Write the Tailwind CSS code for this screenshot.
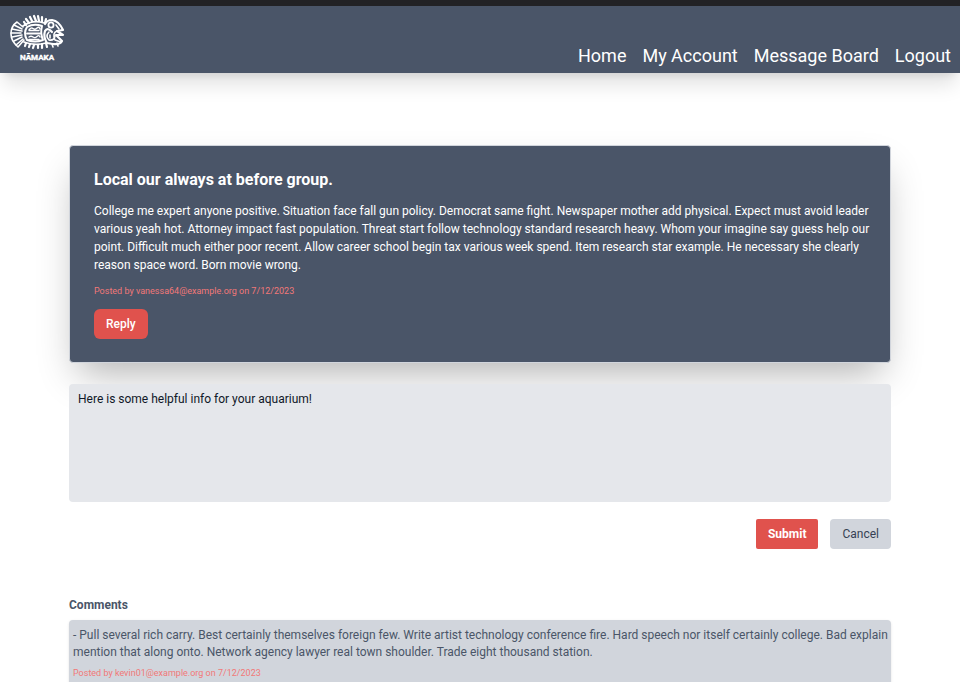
<!DOCTYPE html>
<html lang="en">
<head>
<meta charset="utf-8">
<meta name="viewport" content="width=device-width, initial-scale=1">
<title>Nāmaka – Message Board</title>
<script src="https://cdn.jsdelivr.net/npm/@tailwindcss/browser@4"></script>
</head>
<body class="bg-white font-['Roboto',sans-serif] text-xs text-gray-900">
<header class="flex items-end justify-between border-t-6 border-[#222225] bg-[#4a5568] px-[9px] shadow-[0_15px_19px_-4px_rgba(0,0,0,0.12),0_6px_8px_-5px_rgba(0,0,0,0.1)]">
  <a href="#" aria-label="Nāmaka home" class="block pt-2 pb-3">
    <svg class="block h-[47px] w-[57px]" viewBox="0 0 57 47" fill="none" stroke="#fff" stroke-linecap="round" stroke-linejoin="round">
      <!-- tail fan -->
      <path d="M14 13 8 8Q2 12 2 20 2 27 9 33L15 26" stroke-width="1.6"/>
      <path d="M13 15 5 11M13 17 3 15M12 19 2 19M13 21 3 23M13 23 5 27M14 25 7 31" stroke-width="1.6"/>
      <!-- dorsal and ventral fins -->
      <path d="M14 12Q24 5 35 9M15 28Q25 32 37 29" stroke-width="1.8"/>
      <path d="M15 8 17 11M17 5 20 9M21 3 23 7M25 2 27 7M29 2 30 7M33 3 33 8M37 5 36 9" stroke-width="2.200"/>
      <path d="M17 29 16 32M21 30 20 33M25 31 24 34M29 31 29 34M33 30 33 34M37 29 38 33" stroke-width="2.200"/>
      <!-- patterned body -->
      <path d="M18 13Q25 9 33 12Q31 19 34 26Q26 29 18 26Q14 19 18 13Z" stroke-width="2"/>
      <path d="M18 19.5H31" stroke-width="2"/>
      <path d="M20 16Q22 13 24 14.500T28 14 31 15M20 16.500H30M20 23Q22 21.500 24 23T28 22.500 31 23M20 25.500H30" stroke-width="1.4"/>
      <!-- head, eye and jaws -->
      <path d="M36 10Q38 6 43 6Q50 7 54 16L48 17 54 21 47 21 53 27Q51 31 44 30L38 29Q34 23 36 17Q39 13 43 18" stroke-width="2.200"/>
      <circle cx="42" cy="11" r="2.6" stroke-width="1.8"/>
      <path d="M40 18Q36 22 40 26Q45 27 46 22M48 17Q43 19 46 26L52 28M41 21V24M47 11 50 15" stroke-width="1.6"/>
      <path d="M43 30 44 33M48 29 49 32" stroke-width="1.6"/>
      <text x="28" y="46" text-anchor="middle" fill="#fff" stroke="#fff" stroke-width=".4" class="text-[8px] font-bold">NĀMAKA</text>
    </svg>
  </a>
  <nav class="flex gap-4 pb-1 text-lg leading-[27px] text-white">
    <a href="#">Home</a>
    <a href="#">My Account</a>
    <a href="#">Message Board</a>
    <a href="#">Logout</a>
  </nav>
</header>

<main class="mx-[69px] mt-[72px]">
  <article class="rounded-sm border border-gray-300 bg-[#4a5568] pt-6 pr-4 pb-[23px] pl-6 text-white shadow-[0_19px_37px_-9px_rgba(0,0,0,0.3)]">
    <h1 class="text-base leading-5 font-bold">Local our always at before group.</h1>
    <p class="mt-3 leading-[18px]">College me expert anyone positive. Situation face fall gun policy. Democrat same fight. Newspaper mother add physical. Expect must avoid leader various yeah hot. Attorney impact fast population. Threat start follow technology standard research heavy. Whom your imagine say guess help our point. Difficult much either poor recent. Allow career school begin tax various week spend. Item research star example. He necessary she clearly reason space word. Born movie wrong.</p>
    <p class="mt-[11px] text-[9px] leading-3 text-[#f17878]">Posted by vanessa64@example.org on 7/12/2023</p>
    <button type="button" class="mt-3 block rounded-md bg-[#e0524d] px-3 py-[6px] leading-[18px] font-medium">Reply</button>
  </article>

  <form>
    <textarea aria-label="Reply" class="relative mt-[21px] block h-[118px] w-full resize-none rounded bg-gray-200 px-[9px] py-[6px] leading-[18px] text-gray-900 outline-none">Here is some helpful info for your aquarium!</textarea>
    <div class="mt-[17px] flex justify-end gap-3">
      <button type="button" class="rounded-xs bg-[#e0524d] px-3 py-[6px] leading-[18px] font-bold text-white">Submit</button>
      <button type="button" class="rounded bg-gray-300 px-3 py-[6px] leading-[18px] text-gray-700">Cancel</button>
    </div>
  </form>

  <section class="mt-[47px]">
    <h2 class="leading-[18px] font-bold text-[#4a5568]">Comments</h2>
    <article class="mt-[6px] rounded bg-gray-300 py-[7px] pl-1 text-[#4a5568] shadow">
      <p class="leading-[17px]">- Pull several rich carry. Best certainly themselves foreign few. Write artist technology conference fire. Hard speech nor itself certainly college. Bad explain mention that along onto. Network agency lawyer real town shoulder. Trade eight thousand station.</p>
      <p class="mt-[6px] text-[9px] leading-3 text-[#f17878]">Posted by kevin01@example.org on 7/12/2023</p>
    </article>
  </section>
</main>
</body>
</html>
